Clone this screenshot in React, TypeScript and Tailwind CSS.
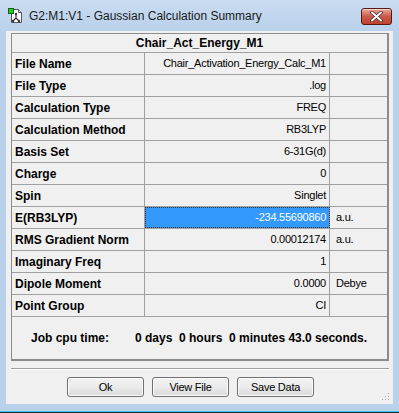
import React from "react";

interface Row {
  label: string;
  value: string;
  unit?: string;
  selected?: boolean;
}

const rows: Row[] = [
  { label: "File Name", value: "Chair_Activation_Energy_Calc_M1" },
  { label: "File Type", value: ".log" },
  { label: "Calculation Type", value: "FREQ" },
  { label: "Calculation Method", value: "RB3LYP" },
  { label: "Basis Set", value: "6-31G(d)" },
  { label: "Charge", value: "0" },
  { label: "Spin", value: "Singlet" },
  { label: "E(RB3LYP)", value: "-234.55690860", unit: "a.u.", selected: true },
  { label: "RMS Gradient Norm", value: "0.00012174", unit: "a.u." },
  { label: "Imaginary Freq", value: "1" },
  { label: "Dipole Moment", value: "0.0000", unit: "Debye" },
  { label: "Point Group", value: "CI" },
];

function TitleIcon() {
  return (
    <svg width="16" height="16" viewBox="0 0 16 16" className="shrink-0">
      <path d="M3.5 1.5h7l3 3v10h-10z" fill="#fff" stroke="#555" />
      <path d="M10.5 1.5v3h3" fill="#ddd" stroke="#555" />
      <path d="M8 6v4M8 10l-3 3M8 10l3 3" stroke="#333" strokeWidth="1.2" fill="none" />
      <circle cx="8" cy="6" r="1.2" fill="#333" />
      <circle cx="5" cy="13" r="1.2" fill="#333" />
      <circle cx="11" cy="13" r="1.2" fill="#333" />
      <rect x="0.5" y="0.5" width="5" height="5" fill="#22cc22" stroke="#116611" />
    </svg>
  );
}

function CloseButton() {
  return (
    <div className="w-[31px] h-[17px] rounded-[3px] border border-[#5a1a14] bg-gradient-to-b from-[#e9a99c] via-[#cc5a4a] to-[#c0402f] flex items-center justify-center shadow-[inset_0_1px_0_rgba(255,255,255,0.5)]">
      <svg width="13" height="11" viewBox="0 0 13 11">
        <path d="M2 1.5l9 8M11 1.5l-9 8" stroke="#4a2a26" strokeWidth="3.6" strokeLinecap="round" />
        <path d="M2 1.5l9 8M11 1.5l-9 8" stroke="#fff" strokeWidth="2" strokeLinecap="round" />
      </svg>
    </div>
  );
}

function Btn({ children }: { children: React.ReactNode }) {
  return (
    <div className="w-[77px] h-[20px] rounded-[3px] border border-[#707070] bg-gradient-to-b from-[#f3f3f3] via-[#ebebeb] to-[#d9d9d9] flex items-center justify-center text-[11px] tracking-[-0.25px] text-black shadow-[inset_0_0_0_1px_#fcfcfc]">
      {children}
    </div>
  );
}

export default function App() {
  return (
    <div
      className="w-[399px] h-[413px] bg-[#b9d1ea] flex flex-col overflow-hidden"
      style={{ fontFamily: '"Liberation Sans", Arial, sans-serif' }}
    >
      {/* title bar */}
      <div className="h-[31px] shrink-0 flex items-start pt-[8px] pl-[8px] pr-[7px] bg-gradient-to-b from-[#c9dcf1] to-[#b9d1ea]">
        <TitleIcon />
        <span className="ml-[5px] text-[12px] leading-[16px] text-[#1a1a1a]">
          G2:M1:V1 - Gaussian Calculation Summary
        </span>
        <div className="ml-auto">
          <CloseButton />
        </div>
      </div>

      {/* client area */}
      <div className="mx-[6px] h-[373px] bg-[#f0f0f0] relative">
        <div className="ml-[5px] mt-[2px] w-[378px] border-l border-t border-r-2 border-b-2 border-[#8c8c8c] text-black">
          <div className="h-[19px] border-b border-[#a0a0a0] flex items-center justify-center text-[12px] font-bold">
            Chair_Act_Energy_M1
          </div>
          {rows.map((r) => (
            <div key={r.label} className="grid grid-cols-[133px_185px_1fr] h-[22px] border-b border-[#a0a0a0]">
              <div className="border-r border-[#a0a0a0] pl-[3px] flex items-center text-[12px] font-bold">
                {r.label}
              </div>
              <div
                className={
                  r.selected
                    ? "border-r border-[#a0a0a0] flex items-center justify-end pr-[3px] text-[11px] tracking-[-0.25px] bg-[#3399ff] text-white outline-1 outline-dotted outline-[#333] -outline-offset-1"
                    : "border-r border-[#a0a0a0] flex items-center justify-end pr-[3px] text-[11px] tracking-[-0.25px]"
                }
              >
                {r.value}
              </div>
              <div className="flex items-center pl-[6px] text-[11px] tracking-[-0.25px]">{r.unit}</div>
            </div>
          ))}
          <div className="h-[42px] flex items-center pl-[19px] text-[12px] font-bold">
            <span className="w-[104px]">Job cpu time:</span>
            <span className="whitespace-pre">0 days  0 hours  0 minutes 43.0 seconds.</span>
          </div>
        </div>

        <div className="ml-[5px] mt-[7px] w-[378px] h-[2px] border-t border-[#a0a0a0] border-b border-b-white" />

        <div className="flex gap-[8px] ml-[61px] mt-[7px]">
          <Btn>Ok</Btn>
          <Btn>View File</Btn>
          <Btn>Save Data</Btn>
        </div>

        <svg width="8" height="8" viewBox="0 0 8 8" className="absolute right-[3px] bottom-[3px]">
          <rect x="6" y="0" width="1" height="1" fill="#a0a0a0" />
          <rect x="3" y="3" width="1" height="1" fill="#a0a0a0" />
          <rect x="6" y="3" width="1" height="1" fill="#a0a0a0" />
          <rect x="0" y="6" width="1" height="1" fill="#a0a0a0" />
          <rect x="3" y="6" width="1" height="1" fill="#a0a0a0" />
          <rect x="6" y="6" width="1" height="1" fill="#a0a0a0" />
        </svg>
      </div>
      <div className="mt-auto h-[1px] bg-[#3cc8e8]" />
      <div className="h-[1px] bg-[#1a2a3a]" />
    </div>
  );
}
